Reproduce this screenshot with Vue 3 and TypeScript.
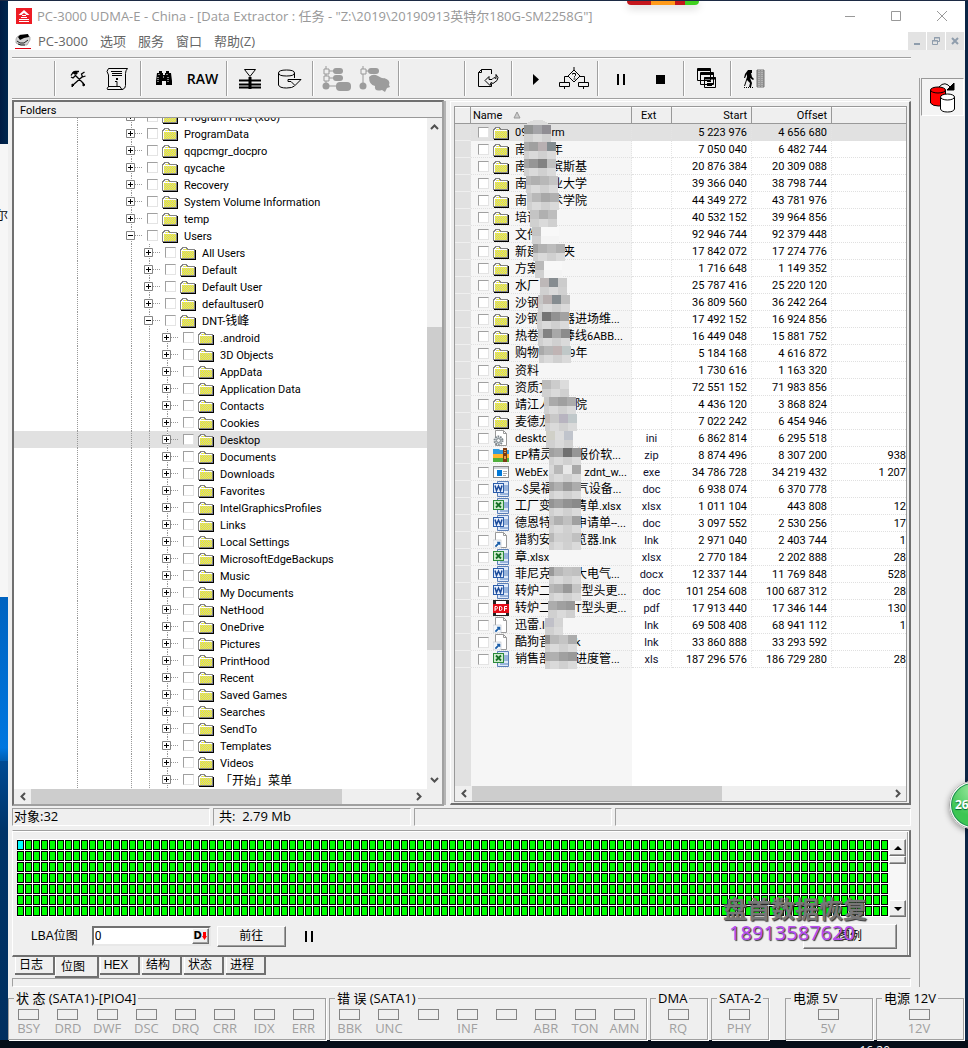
<script setup lang="ts">
import { ref } from 'vue'

interface TreeNode { name: string; level: number; open?: boolean }
interface FileRow { name: string; kind: string; ext: string; start: string; offset: string; size: string }
interface Tile { x: number; y: number; w: number; fill: string; under: string }

const level = (n: number, names: string[]): TreeNode[] => names.map((name) => ({ name, level: n }))

const nodes: TreeNode[] = [
  ...level(0, ['Program Files (x86)', 'ProgramData', 'qqpcmgr_docpro', 'qycache', 'Recovery', 'System Volume Information', 'temp']),
  { name: 'Users', level: 0, open: true },
  ...level(1, ['All Users', 'Default', 'Default User', 'defaultuser0']),
  { name: 'DNT-钱峰', level: 1, open: true },
  ...level(2, [
    '.android', '3D Objects', 'AppData', 'Application Data', 'Contacts', 'Cookies', 'Desktop', 'Documents',
    'Downloads', 'Favorites', 'IntelGraphicsProfiles', 'Links', 'Local Settings', 'MicrosoftEdgeBackups',
    'Music', 'My Documents', 'NetHood', 'OneDrive', 'Pictures', 'PrintHood', 'Recent', 'Saved Games',
    'Searches', 'SendTo', 'Templates', 'Videos', '「开始」菜单',
  ]),
]
const selectedNode = ref('Desktop')

const source: string[][] = [
  ['09　　rm', 'folder', '', '5 223 976', '4 656 680', ''],
  ['南　　年', 'folder', '', '7 050 040', '6 482 744', ''],
  ['南　　滨斯基', 'folder', '', '20 876 384', '20 309 088', ''],
  ['南　　业大学', 'folder', '', '39 366 040', '38 798 744', ''],
  ['南京　术学院', 'folder', '', '44 349 272', '43 781 976', ''],
  ['培训', 'folder', '', '40 532 152', '39 964 856', ''],
  ['文件', 'folder', '', '92 946 744', '92 379 448', ''],
  ['新建　　夹', 'folder', '', '17 842 072', '17 274 776', ''],
  ['方案', 'folder', '', '1 716 648', '1 149 352', ''],
  ['水厂', 'folder', '', '25 787 416', '25 220 120', ''],
  ['沙钢', 'folder', '', '36 809 560', '36 242 264', ''],
  ['沙钢　　器进场维...', 'folder', '', '17 492 152', '16 924 856', ''],
  ['热卷　　棒线6ABB...', 'folder', '', '16 449 048', '15 881 752', ''],
  ['购物　　19年', 'folder', '', '5 184 168', '4 616 872', ''],
  ['资料', 'folder', '', '1 730 616', '1 163 320', ''],
  ['资质文', 'folder', '', '72 551 152', '71 983 856', ''],
  ['靖江人　　院', 'folder', '', '4 436 120', '3 868 824', ''],
  ['麦德龙', 'folder', '', '7 022 242', '6 454 946', ''],
  ['desktop', 'ini', 'ini', '6 862 814', '6 295 518', ''],
  ['EP精灵　　报价软...', 'zip', 'zip', '8 874 496', '8 307 200', '938'],
  ['WebEx　　　zdnt_w...', 'exe', 'exe', '34 786 728', '34 219 432', '1 207'],
  ['~$昊福　　气设备...', 'doc', 'doc', '6 938 074', '6 370 778', ''],
  ['工厂变　　清单.xlsx', 'xls', 'xlsx', '1 011 104', '443 808', '12'],
  ['德恩特　　申请单--...', 'doc', 'doc', '3 097 552', '2 530 256', '17'],
  ['猎豹安　　览器.lnk', 'lnk', 'lnk', '2 971 040', '2 403 744', '1'],
  ['章.xlsx', 'xls', 'xlsx', '2 770 184', '2 202 888', '28'],
  ['菲尼克　　大电气...', 'doc', 'docx', '12 337 144', '11 769 848', '528'],
  ['转炉二　　T型头更...', 'doc', 'doc', '101 254 608', '100 687 312', '28'],
  ['转炉二　　T型头更...', 'pdf', 'pdf', '17 913 440', '17 346 144', '130'],
  ['迅雷.lnk', 'lnk', 'lnk', '69 508 408', '68 941 112', '1'],
  ['酷狗音　　k', 'lnk', 'lnk', '33 860 888', '33 293 592', ''],
  ['销售部　　进度管...', 'xls', 'xls', '187 296 576', '186 729 280', '28'],
]
const files: FileRow[] = source.map(([name, kind, ext, start, offset, size]) => ({ name, kind, ext, start, offset, size }))

/* Redaction tiles over the name column: row, left edge, tile shades. */
const maskSource: [number, number, string][] = [
  [0, 9, '929494 a4a4a8 908e94'], [1, 9, 'aaaaaa a0a0a0 b8b0b2 838c90'], [2, 9, 'a4a4a4 969696 828282 c0c0c0'],
  [3, 11, 'b8b8b8 b0b0b0 b8b8b8 c4c4c4'], [4, 12, 'c8c8c8 b8b8b8 a8a8a8 b0b0b0'], [5, 15, 'c4c4c4 b0b0b0 bdbdbd'],
  [6, 17, 'c4c4c4 f8f8f8 f8f8f8'], [7, 18, 'a0a0a0 b2b2b2 bcbcbc b0b0b0'], [8, 20, 'bababa f8f8f8 f8f8f8'],
  [9, 25, 'bdb8b8 868c90 cccccc'], [10, 23, 'c6c6c6 b8b0b0 858c90 c0c0c0'], [11, 22, 'c8c8c8 747474 929292 a2a2a2'],
  [12, 23, 'c0c0c0 828282 a8a8a8 8c8c8c'], [13, 24, 'aaaaaa b8b8b8 c0b4b4 c0c8c8'], [15, 27, 'bcbcbc cccccc dcdcdc'],
  [16, 29, 'c8c8c8 aaaaaa a0a0a0 acacac'], [17, 30, 'c0b8b4 c8c8c8 b8b4c0 c0c8ca'], [18, 31, 'd0d0c8 dcdcdc c0c4cc'],
  [19, 34, 'a0a0a0 a8a8a8 707070 969696'], [20, 34, 'd8d8d8 b8b8b8 e8e8e8 a8a8a8'], [21, 34, 'a0a0a0 b0b0b0 999999 acacac'],
  [22, 34, '949494 a0a0a0 929292 8a8a8a'], [23, 34, 'c4c4c4 b0b0b0 c0c0c0 a0a0a0'], [24, 34, 'b8b8b8 d0d0d0 cecece c0c0c0'],
  [26, 34, '999999 b8b8b8 c4c4c4 c0c0c0'], [27, 34, 'b8b8b8 b0b0b0 999999 c4c4c4'], [28, 33, 'acacac a0a0a0 999999'],
  [29, 30, 'c0c0c8 d4d4d4'], [30, 30, '929292 bababa c4c4c4 acacac'], [31, 30, 'acacac b0b0b0 a0a0a0 999999'],
]
/* Four-tile rows start with a narrow tile, the others use full tiles. */
const tiles: Tile[] = maskSource.flatMap(([row, x, s]) => {
  const shades = s.split(' ')
  const cut = shades.length > 3 ? 4 : 0
  return shades.map((c, k) => ({
    x: k ? x - cut + k * 9 : x,
    y: row * 17 + 6,
    w: k ? 9 : 9 - cut,
    fill: '#' + c,
    under: c === 'f8f8f8' ? '#f4f4f4' : k % 2 ? '#dadada' : '#d0d0d0',
  }))
})

/* Splits a label into runs so that Latin text gets its own face and size. */
const runs = (s: string) => (s.match(/[\x20-\x7e]+|[^\x20-\x7e]+/g) ?? []).map((text) => ({ text, latin: /^[\x20-\x7e]/.test(text) }))

const toolbar: { width: number; items: string[] }[] = [
  { width: 42, items: [] },
  { width: 86, items: ['tools', 'script'] },
  { width: 86, items: ['find', 'RAW'] },
  { width: 86, items: ['filter', 'disk'] },
  { width: 86, items: ['tree-a', 'tree-b'] },
  { width: 66, items: [] },
  { width: 47, items: ['export'] },
  { width: 86, items: ['play', 'decision'] },
  { width: 86, items: ['pause', 'stop'] },
  { width: 47, items: ['windows'] },
  { width: 47, items: ['exit'] },
]
const menus = ['PC-3000', '选项', '服务', '窗口', '帮助(Z)']
const tabs = ['日志', '位图', 'HEX', '结构', '状态', '进程']
const activeTab = ref('位图')
const lba = ref('0')

const groups = [
  { title: '状 态 (SATA1)-[PIO4]', first: false, leds: ['BSY', 'DRD', 'DWF', 'DSC', 'DRQ', 'CRR', 'IDX', 'ERR'] },
  { title: '错 误 (SATA1)', first: false, leds: ['BBK', 'UNC', '', 'INF', '', 'ABR', 'TON', 'AMN'] },
  { title: 'DMA', first: false, leds: ['RQ'] },
  { title: 'SATA-2', first: false, leds: ['PHY'] },
  { title: '电源 5V', first: true, leds: ['5V'] },
  { title: '电源 12V', first: false, leds: ['12V'] },
]
</script>

<template>
  <div class="desktop">
    <svg class="defs" width="0" height="0" aria-hidden="true">
      <defs>
        <pattern id="dither" width="2" height="2" patternUnits="userSpaceOnUse">
          <rect width="2" height="2" fill="#ffff00" /><rect width="1" height="1" fill="#c0c0c0" /><rect x="1" y="1" width="1" height="1" fill="#c0c0c0" />
        </pattern>
        <symbol id="k-folder" viewBox="0 0 16 16">
          <path d="M1 15h14V6h1v10H1z" fill="#000" />
          <path d="M0 5h1V4h1V3h5v1h1v1h7v10H0z" fill="#848484" />
          <path d="M1 6h1V5h1V4h3v1h1v1h7v8H1z" fill="#fff" />
          <rect x="2" y="7" width="12" height="7" fill="url(#dither)" /><path d="M3 5h4v1H2z" fill="url(#dither)" />
        </symbol>
        <symbol id="k-lnk" viewBox="0 0 16 16">
          <path d="M2.5 .5h8l3 3v12h-11z" fill="#fff" stroke="#999" /><path d="M10.500 .5v3h3" fill="none" stroke="#999" />
          <rect x="0" y="8" width="8" height="8" fill="#f2f6fa" stroke="#b8c0c8" stroke-width=".6" />
          <path d="M2 14l3-3-1-1h3v3l-1-1-3 3z" fill="#1b5ea8" stroke="#1b5ea8" stroke-width=".5" />
        </symbol>
        <symbol id="k-ini" viewBox="0 0 16 16">
          <path d="M2.500 .5h8l3 3v12h-11z" fill="#fff" stroke="#999" /><path d="M10.500 .5v3h3" fill="none" stroke="#999" />
          <circle cx="5.500" cy="10.500" r="4" fill="#cfd6da" stroke="#7e878c" stroke-width="2" stroke-dasharray="1.500 1" /><circle cx="5.500" cy="10.500" r="2" fill="#eef1f2" stroke="#7e878c" />
        </symbol>
        <symbol id="k-zip" viewBox="0 0 16 16">
          <path d="M0 2h6l1 1h9v5H0z" fill="#2f9be0" /><path d="M0 7h16v4H0z" fill="#ffb62e" /><path d="M0 11h16v4H0z" fill="#4fb03c" />
          <path d="M10 1h4v14h-4z" fill="#7a3b12" /><path d="M11 3h2v1h-2zM11 5h2v1h-2zM11 9h2v3h-2z" fill="#e0a050" />
        </symbol>
        <symbol id="k-exe" viewBox="0 0 16 16">
          <rect x=".5" y="2.500" width="15" height="11" fill="#fff" stroke="#888" /><path d="M1 3h14v2H1z" fill="#d0d4d8" />
          <rect x="4" y="6" width="5" height="6" fill="#0078d7" /><path d="M10 7h4v1h-4zM10 9h4v1h-4zM10 11h3v1h-3z" fill="#aaa" />
        </symbol>
        <symbol id="k-doc" viewBox="0 0 16 16">
          <path d="M4.500 .5h11v15h-11z" fill="#dfe9f8" stroke="#5b7fb8" /><path d="M11 5h4M11 7h4M7 13h8M11 9h4" stroke="#5580c0" />
          <rect x="0" y="2" width="11" height="10" fill="#2a5caa" /><rect x="1" y="3" width="9" height="8" fill="#e8f0fc" />
          <path d="M2 4.500l1.500 5L5.500 5l2 4.500 1.500-5" fill="none" stroke="#1b4a9a" stroke-width="1.500" />
        </symbol>
        <symbol id="k-xls" viewBox="0 0 16 16">
          <path d="M4.500 .5h11v15h-11z" fill="#dfe9f8" stroke="#5b7fb8" /><path d="M11 5h4M11 7h4M7 13h8M11 9h4" stroke="#5580c0" />
          <rect x="0" y="2" width="11" height="10" fill="#2b8a3a" /><rect x="1" y="3" width="9" height="8" fill="#cfeccf" />
          <path d="M3 4.500l5 5M8 4.500l-5 5" fill="none" stroke="#157025" stroke-width="1.800" />
        </symbol>
        <symbol id="k-pdf" viewBox="0 0 16 16">
          <path d="M0 0h16v16H0z" fill="#222" /><path d="M3 1h10v3H3zM3 13h10v2H3z" fill="#fff" /><path d="M0 4h16v9H0z" fill="#e20b16" />
          <path d="M2 11V6.500h1.500q1 0 1 1.200T3.500 9H2M6.500 6.500v4h1q1.500 0 1.500-2t-1.500-2zM11.500 11V6.500H14M11.500 8.700H14" fill="none" stroke="#fff" />
        </symbol>
      </defs>
    </svg>

    <div class="screen">
      <div class="wall left"><i class="w1"></i><i class="w2">尔</i></div>

      <div class="window">
        <header class="title">
          <svg width="16" height="16" viewBox="0 0 16 16"><path d="M0 0h16v16H0z" fill="#ed1c24" /><path d="M8 2L2.500 7h3L8 5l2.500 2h3z" fill="#fff" /><path d="M6 7.500h4M5 9.500h6M3 11.500h10M3 13.500h10" stroke="#fff" /></svg>
          <h1>PC-3000 UDMA-E - China - [Data Extractor : 任务 - "Z:\2019\20190913英特尔180G-SM2258G"]</h1>
          <div class="winbtns">
            <button aria-label="Minimize"><svg width="12" height="12"><path d="M1 6.500h10" stroke="#999" /></svg></button>
            <button aria-label="Maximize"><svg width="12" height="12"><path d="M1.500 1.500h9v9h-9z" fill="none" stroke="#999" /></svg></button>
            <button aria-label="Close"><svg width="12" height="12"><path d="M1 1l10 10M11 1L1 11" stroke="#999" /></svg></button>
          </div>
        </header>

        <nav class="menu">
          <svg width="16" height="16" viewBox="0 0 16 16"><path d="M2 4l3-2h8l2 2v3l-3 5H5L1 10V6z" fill="#d4d4d4" stroke="#888" stroke-width=".6" /><path d="M5 2l8-1 1 3-5 1-4 2-2-3z" fill="#000" /><path d="M2 8l3 2h4l4-3M3 11l3 1h4" fill="none" stroke="#222" /><path d="M0 15.500h16" stroke="#e00010" /></svg>
          <button v-for="m in menus" :key="m">{{ m }}</button>
          <div class="mdi">
            <button aria-label="Minimize document"><svg width="10" height="10"><path d="M2 8h6" stroke="#8f9dac" stroke-width="2" /></svg></button>
            <button aria-label="Restore document"><svg width="10" height="10"><path d="M3.500 4V1.500h5v4H7M3 2h6M1.500 4.500h5v4h-5zM1 5h6" fill="none" stroke="#8f9dac" /></svg></button>
            <button aria-label="Close document"><svg width="10" height="10"><path d="M2 2l6 6M8 2L2 8" stroke="#8f9dac" stroke-width="2" /></svg></button>
          </div>
        </nav>

        <div class="body">
          <main>
            <div class="toolbar">
              <div v-for="(g, i) in toolbar" :key="i" class="tgroup" :style="{ width: g.width + 'px' }">
                <button v-for="t in g.items" :key="t" :aria-label="t" :disabled="t.startsWith('tree')">
                  <template v-if="t === 'RAW'">RAW</template>
                  <svg v-else width="32" height="28" viewBox="0 0 32 28" fill="none" stroke="#000">
                    <g v-if="t === 'tools'"><path d="M9 10.500l2-3 2-1h4M9 12l2 1 3-3M13 10l9 9M22.500 7l-3 2 1 3 3-1M20 12l-9 8" stroke-width="1.300" /><path d="M11 7h4v2h-3zM10 19l2 1-2 2zM21 18l2 2-2 1z" fill="#000" /></g>
                    <g v-else-if="t === 'script'"><path d="M7.500 3.500h19q-2 2-2 5v12q0 3-3 4H6.500q-1-1 1-3V10q-3-4 0-6.500zM7 21.500h12q1 3 3 3" /><path d="M10 6.500h11M11 8.500h10M11 10.500h10M13 21.500h6M14 16.500h2v5" /><path d="M15 13h2v2h-2z" fill="#000" stroke="none" /></g>
                    <g v-else-if="t === 'find'"><path d="M9 8h2V6h3v2h1v2h2V8h1V6h3v2h2l1 8v4h-6v-4h-4v4H8v-4z" fill="#000" stroke="none" /><path d="M10 12v5M11 9v2M20 12v5M19 9v2M15 12h2" stroke="#fff" stroke-dasharray="1 1" /></g>
                    <g v-else-if="t === 'filter'"><path d="M10.500 4.500h11l-5.500 7z" /><path d="M5 15.500h22M5 19.500h22M5 22.500h22" stroke-width="2" /><path d="M16 12v12" stroke-width="3" /></g>
                    <g v-else-if="t === 'disk'"><path d="M5.500 8v12q1 3 8 3 6 0 8-2M21.500 8v5M5.500 8q0-3 8-3t8 3-8 3-8-3M15 14.500h13l-6 6-4-4h-3z" /></g>
                    <g v-else-if="t === 'tree-a'" class="dim"><path d="M6 1v22M6 6h10M6 13h10M6 21h10" stroke="#999" /><path d="M4 4h5v5H4zM4 11h5v5H4z" fill="#efefef" stroke="#999" /><rect x="13" y="3" width="10" height="6" rx="3" /><rect x="13" y="10" width="10" height="6" rx="3" /><circle cx="6" cy="21" r="3.500" /><rect x="16" y="17" width="15" height="9" rx="4" /></g>
                    <g v-else-if="t === 'tree-b'" class="dim"><path d="M4 1v22M4 6h10" stroke="#999" /><path d="M2 4h5v5H2z" fill="#efefef" stroke="#999" /><rect x="9" y="3" width="11" height="6" rx="3" /><circle cx="4" cy="21" r="3.500" /><path d="M10 12q4-4 9-1t6 2q7 2 5 7l1 2-3 1-2 4-3-2q-8 2-7-4-6-1-6-9z" /></g>
                    <g v-else-if="t === 'export'"><path d="M19.500 9V4.500h-10l-3 3v14h13v-3M9.500 4.500v3h-3" /><path d="M24 9.500l2 3-1 3-4 3-2-1-1 3-5-5 4-4v3h3l2-2 2 1z" fill="#efefef" /></g>
                    <path v-else-if="t === 'play'" d="M14 9v11l6-5.500z" fill="#000" stroke="none" />
                    <g v-else-if="t === 'decision'"><path d="M16 2v3l6 6-6 6-6-6 6-6M10 11.500H6.500v6M22 11.500h4.500v6M1.500 17.500h10v4h-10zM20.500 17.500h10v4h-10zM6.500 22v2M25.500 22v2M14.500 9.500v-1h3v2l-1 1v1" /><path d="M15.500 14h2" /></g>
                    <path v-else-if="t === 'pause'" d="M13 9v11M19 9v11" stroke-width="2" />
                    <path v-else-if="t === 'stop'" d="M12 10h9v9h-9z" fill="#000" stroke="none" />
                    <g v-else-if="t === 'windows'" fill="#efefef"><path d="M6.500 3.500h13v12h-13zM9.500 7.500h13v12h-13zM13.500 12.500h11v10h-11z" /><path d="M6 5h14M9 9h14M13 13.500h12" stroke-width="2" /><path d="M16 16.500h4M16 18.500h7M16 20.500h5" /></g>
                    <g v-else><path d="M19 5h7v17h-7z" fill="#999" stroke="#777" /><path d="M21 5v17M24 5v17" stroke="#ccc" stroke-dasharray="1 1" /><path d="M10 5h4v3h-1l1 4 2 2-1 1-3-2 2 5-1 4h-2l1-4-3-3-2 6H6l3-9V9l-2 4H6l1-4z" fill="#000" stroke="none" /><path d="M6 22.500h10" stroke-dasharray="1 1" /></g>
                  </svg>
                </button>
              </div>
            </div>

            <div class="split">
              <section class="tree">
                <h2>Folders</h2>
                <div class="treemain">
                  <ul>
                    <li v-for="n in nodes" :key="n.name" :class="['l' + n.level, { sel: n.name === selectedNode }]" @click="selectedNode = n.name">
                      <i class="guide g0"></i><i v-if="n.level > 0" class="guide g1"></i><i v-if="n.level > 1" class="guide g2"></i>
                      <span class="exp"><svg width="9" height="9"><path d="M.5 .5h8v8h-8z" fill="#fff" stroke="#848484" /><path :d="n.open ? 'M2 4.500h5' : 'M2 4.500h5M4.500 2v5'" stroke="#000" /></svg></span>
                      <i class="stub"></i>
                      <input type="checkbox" :aria-label="n.name" />
                      <svg class="icon" width="16" height="16" shape-rendering="crispEdges"><use href="#k-folder" /></svg>
                      <span class="label"><span v-for="(r, k) in runs(n.name)" :key="k" :class="{ latin: r.latin }">{{ r.text }}</span></span>
                    </li>
                  </ul>
                  <div class="vbar"><button aria-label="Up"><svg width="9" height="6"><path d="M1 5l3.500-3.500L8 5" /></svg></button><i></i><button aria-label="Down"><svg width="9" height="6"><path d="M1 1l3.500 3.500L8 1" /></svg></button></div>
                </div>
                <div class="hbar"><button aria-label="Left"><svg width="6" height="9"><path d="M5 1L1.500 4.500 5 8" /></svg></button><div class="track"><i class="t1"></i></div><button aria-label="Right"><svg width="6" height="9"><path d="M1 1l3.500 3.500L1 8" /></svg></button><b></b></div>
              </section>

              <section class="list">
                <div class="inner">
                  <div class="rows">
                    <table>
                      <colgroup><col class="c0" /><col class="c1" /><col class="c2" /><col class="c3" /><col class="c3" /><col /></colgroup>
                      <thead><tr><th></th><th class="nm">Name <svg width="8" height="8"><path d="M4 1l3 6H1z" fill="#ccc" stroke="#999" /></svg></th><th class="mid">Ext</th><th>Start</th><th>Offset</th><th></th></tr></thead>
                      <tbody>
                        <tr v-for="(f, i) in files" :key="i" :class="{ sel: i === 0 }">
                          <td class="gut"></td>
                          <td class="nm"><div class="cell"><input type="checkbox" :aria-label="f.name" /><svg class="icon" width="16" height="16" :shape-rendering="f.kind === 'folder' ? 'crispEdges' : 'auto'"><use :href="'#k-' + f.kind" /></svg><span class="label"><span v-for="(r, k) in runs(f.name)" :key="k" :class="{ latin: r.latin }">{{ r.text }}</span></span></div></td>
                          <td class="mid">{{ f.ext }}</td><td>{{ f.start }}</td><td>{{ f.offset }}</td><td class="sz">{{ f.size }}</td>
                        </tr>
                      </tbody>
                    </table>
                    <svg class="mask" width="90" height="552" shape-rendering="crispEdges">
                      <path d="M10 6q13-11 25 0z" fill="#dcdcdc" />
                      <g v-for="(t, k) in tiles" :key="k">
                        <rect :x="t.x" :y="t.y" :width="t.w" height="9" :fill="t.fill" />
                        <rect :x="t.x" :y="t.y + 9" :width="t.w" height="8" :fill="t.under" />
                      </g>
                    </svg>
                  </div>
                  <div class="hbar"><button aria-label="Left"><svg width="6" height="9"><path d="M5 1L1.500 4.500 5 8" /></svg></button><div class="track"><i class="t2"></i></div><button aria-label="Right"><svg width="6" height="9"><path d="M1 1l3.500 3.500L1 8" /></svg></button></div>
                </div>
              </section>
            </div>

            <div class="status"><span>对象:32</span><span class="in">共:&nbsp; 2.79 Mb</span><span></span><span></span></div>

            <section class="map">
              <div class="grid">
                <svg width="100%" height="78" shape-rendering="crispEdges" role="img" aria-label="LBA map">
                  <defs><pattern id="lba" y="1" width="8" height="11" patternUnits="userSpaceOnUse"><rect width="7" height="10" fill="#000" /><rect x="1" y="1" width="5" height="8" fill="#00ff00" /></pattern></defs>
                  <rect y="1" width="100%" height="77" fill="url(#lba)" /><rect x="1" y="2" width="5" height="8" fill="#00ffff" />
                </svg>
                <div class="oldbar"><button aria-label="Scroll up"><svg width="8" height="4"><path d="M0 4l4-4 4 4z" /></svg></button><i></i><span></span><button aria-label="Scroll down"><svg width="8" height="4"><path d="M0 0h8L4 4z" /></svg></button></div>
              </div>
              <div class="controls">
                <label for="lba-input">LBA位图</label>
                <div class="field"><input id="lba-input" v-model="lba" type="text" /><button aria-label="Decimal"><b>D</b><svg width="5" height="8"><path d="M1 0h3v4h1L2.500 8 0 4h1z" fill="#f00" /></svg></button></div>
                <button class="btn go">前往</button>
                <button class="plain" aria-label="Pause"><svg width="8" height="11"><path d="M1 0v11M7 0v11" stroke="#000" stroke-width="2" /></svg></button>
                <button class="btn legend">图例</button>
              </div>
              <div class="watermark"><b>盘首数据恢复</b><span>18913587620</span></div>
            </section>
            <div class="tabs" role="tablist"><button v-for="t in tabs" :key="t" role="tab" :class="{ on: t === activeTab }" @click="activeTab = t">{{ t }}</button></div>
            <div class="foot"></div>
          </main>

          <aside>
            <button aria-label="Copy disk"><svg width="28" height="31" viewBox="0 0 28 31" stroke="#000"><path d="M10 5q6-7 12 1" fill="none" /><path d="M25 1v7h-7z" fill="#000" /><path d="M1.500 8v13q2 3 8 3t7-3V8" fill="#f00" /><ellipse cx="9" cy="8" rx="7.500" ry="3" fill="#f00" /><path d="M11.500 15v12q1 3 7 3t7-3V15" fill="#fff" /><ellipse cx="18.500" cy="15" rx="7" ry="3" fill="#fff" /></svg></button>
          </aside>
        </div>

        <div class="leds">
          <fieldset v-for="g in groups" :key="g.title" :class="{ first: g.first }">
            <legend>{{ g.title }}</legend>
            <div v-for="(l, i) in g.leds" :key="i" class="led"><i></i><span>{{ l }}</span></div>
          </fieldset>
        </div>
      </div>
      <div class="wall right"></div>
    </div>
    <footer class="taskbar"><time>16:20</time></footer>
    <div class="ribbon"></div>
    <div class="ball">26</div>
  </div>
</template>

<style>
body { margin: 0; background: #050d18; }
</style>

<style scoped>
.desktop { position: relative; overflow: hidden; border-top: 1px solid #1c2a44; font: 12px/16px "Liberation Sans", "Noto Sans CJK SC", sans-serif; color: #000; }
.desktop * { box-sizing: border-box; }
.defs { position: absolute; }
button { font: inherit; color: inherit; padding: 0; margin: 0; border: 0; background: none; display: flex; align-items: center; justify-content: center; }
.screen { display: grid; grid-template-columns: 8px minmax(0, 1fr) 3px; }
.wall.left { background: linear-gradient(#0063c0, #0077e0 92%, #005cb0) 0 596px / 8px 164px no-repeat, linear-gradient(#004a94 0, #003468 70px, #001c40 100%) 0 760px no-repeat #00204a; display: flex; flex-direction: column; }
.wall i { display: block; overflow: hidden; font-style: normal; }
.w1 { height: 143px; background: linear-gradient(90deg, #001c44, #00284f); }
.w2 { height: 453px; background: #f6f6f6; padding-top: 64px; font-size: 12px; text-indent: -4px; }
.wall.right { background: #0b2545; }
.window { background: #efefef; }
.title { display: flex; align-items: center; height: 30px; background: #fff; padding: 0 17px 0 8px; }
h1 { margin: 0 auto 0 5px; font: 13px/20px "Open Sans", "Noto Sans CJK SC", sans-serif; color: #999; white-space: nowrap; }
.winbtns { display: flex; gap: 34px; }
.menu { display: flex; align-items: center; height: 19px; background: #fff; padding-left: 7px; font: 13px/18px "Open Sans", "Noto Sans CJK SC", sans-serif; color: #666; }
.menu > svg { margin-right: 7px; }
.menu > button { margin-right: 12px; }
.mdi { display: flex; gap: 1px; margin: 0 1px 0 auto; }
.mdi button { width: 18px; height: 18px; background: #e3e3e3; }
.body { display: flex; padding-left: 4px; }
main { flex: 1; min-width: 0; }
aside { width: 46px; margin: 28px 0 0 8px; border-left: 1px solid #a0a0a0; }
aside button { width: 43px; height: 38px; margin-left: 1px; border: 1px solid; border-color: #999 #fff #fff #999; background: #f4f4f4; }
.toolbar { display: flex; margin-top: 7px; height: 42px; padding: 3px 0 2px; border-top: 1px solid #a0a0a0; border-bottom: 1px solid #a0a0a0; box-shadow: inset 0 1px #fff, 0 1px #fff; }
.tgroup { display: flex; padding: 0 3px; border-left: 1px solid #a0a0a0; box-shadow: inset 1px 0 #fff; }
.tgroup:first-child { border-left: 0; box-shadow: none; }
.tgroup button { width: 39px; flex: none; font: 600 14px/18px "Open Sans", sans-serif; }
.dim rect, .dim circle, .dim > path:last-child { fill: #9c9c9c; stroke: none; }

.split { display: grid; grid-template-columns: 432fr 461fr; gap: 6px; margin-top: 1px; }
.tree { border: 2px solid; border-color: #707070 #a0a0a0 #a0a0a0 #707070; min-width: 0; box-shadow: 3px 0 0 -1px #b4b4b4; display: flex; flex-direction: column; }
h2 { margin: 0; padding-left: 6px; height: 16px; font: 11px/17px Roboto, "Liberation Sans", sans-serif; border-bottom: 1px solid #999; }
.treemain { display: flex; flex: none; height: 671px; background: #fff; overflow: hidden; }
ul { flex: 1; min-width: 0; margin: -10px 0 0; padding: 0; list-style: none; }
li { display: flex; align-items: center; height: 17px; white-space: nowrap; }
li .icon { align-self: flex-start; }
li.sel, tr.sel, tr.sel td.nm { background: #e1e1e1; }
.guide { align-self: stretch; flex: none; border-right: 1px dotted #999; }
.g0 { width: 64px; }
.g1 { width: 54px; }
.g2 { width: 18px; }
.exp { display: flex; align-items: center; flex: none; align-self: stretch; width: 9px; background: repeating-linear-gradient(#999 0 1px, #fff 1px 2px) 5px 0 / 1px 17px no-repeat; }
li.l0 .exp { margin-left: 48px; }
li.l1 .exp, li.l2 .exp { margin-left: 12px; }
.stub { width: 7px; margin-right: 5px; border-top: 1px dotted #999; flex: none; }
input[type="checkbox"] { appearance: none; flex: none; width: 11px; height: 11px; margin: 0; background: #fff; border: 1px solid; border-color: #a0a0a0 #e4e4e4 #e4e4e4 #a0a0a0; }
.icon { flex: none; margin-left: 4px; }
.label { margin-left: 6px; font: 12px/16px "Noto Sans CJK SC", sans-serif; }
.latin, td, th { font: 11px/16px Roboto, "Liberation Sans", sans-serif; }
.vbar { width: 15px; background: #efefef; display: flex; flex-direction: column; flex: none; }
.vbar button { height: 18px; }
.vbar i { margin: 191px 0 auto; height: 323px; background: #cdcdcd; }
.vbar path, .hbar path { fill: none; stroke: #505050; stroke-width: 2; }
.hbar { display: flex; height: 15px; background: #efefef; }
.hbar button { width: 17px; }
.hbar b { width: 15px; }
.track { flex: 1; display: flex; }
.t1 { width: 82%; background: #cdcdcd; }
.t2 { width: 60%; background: #cdcdcd; }
.list { min-width: 0; margin: 1px 0; padding: 4px 2px 1px 3px; border: 1px solid #fff; border-right: 2px solid #707070; border-bottom: 2px solid #707070; display: flex; flex-direction: column; }
.inner { flex: 1; border: 1px solid #999; display: flex; flex-direction: column; overflow: hidden; }
.rows { position: relative; flex: 1; background: linear-gradient(90deg, #e1e1e1 16px, #f6f6f6 16px 177px, #fff 177px); }
table { width: 100%; table-layout: fixed; border-collapse: separate; border-spacing: 0; }
.c0 { width: 16px; } .c1 { width: 161px; } .c2 { width: 40px; } .c3 { width: 80px; }
th { height: 17px; padding: 2px 4px 0 0; line-height: 14px; text-align: right; background: #efefef; border-right: 1px solid #999; border-bottom: 1px solid #999; box-shadow: inset 0 1px #fff; }
th:last-child { border-right: 0; }
th.nm { text-align: left; padding-left: 2px; }
th.nm svg { margin-left: 8px; }
th.mid { text-align: left; padding-left: 9px; }
td { height: 17px; padding: 2px 4px 0 0; line-height: 14px; text-align: right; white-space: nowrap; border-right: 1px dotted #e4e4e4; border-bottom: 1px dotted #e0e0e0; overflow: hidden; }
td.mid { text-align: center; padding: 2px 0 0; color: #101030; }
td.sz { padding: 2px 0 0; border-right: 0; }
td.gut { border-bottom: 1px solid #efefef; }
td.nm { padding: 0 0 0 7px; }
.cell { display: flex; align-items: center; height: 16px; }
.mask { position: absolute; left: 60px; top: 12px; }

.status { display: flex; gap: 3px; height: 18px; margin-top: 2px; font: 13px/17px "Open Sans", "Noto Sans CJK SC", sans-serif; }
.status span { flex: 0 1 198px; border: 1px solid; border-color: #a0a0a0 #fff #fff #a0a0a0; padding-left: 1px; white-space: pre; line-height: 15px; }
.status span:last-child { flex: 1; }
.status .in { padding-left: 5px; }
.map { position: relative; margin-top: 4px; border: 1px solid; border-color: #a0a0a0 #707070 #707070 #fff; border-right-width: 2px; border-bottom-width: 2px; box-shadow: inset 0 1px #fff, inset -1px 0 #fff, inset -2px 0 #a0a0a0; padding: 8px 3px 0 4px; }
.grid { display: flex; background: #fff; }
.grid > svg { flex: 1; min-width: 0; }
.oldbar { width: 17px; display: flex; flex-direction: column; background: #f7f7f7; }
.oldbar button { height: 17px; }
.oldbar button, .oldbar i, .btn, .field button { background: #efefef; border: 1px solid; border-color: #fff #707070 #707070 #fff; box-shadow: inset -1px -1px #a0a0a0; }
.oldbar i { height: 8px; }
.oldbar span { flex: 1; }
.controls { display: flex; align-items: center; height: 38px; padding: 0 9px 0 14px; }
.field { display: flex; width: 119px; height: 20px; margin: 0 6px 0 14px; background: #fff; border: 2px solid; border-color: #707070 #e8e8e8 #e8e8e8 #707070; }
.field input { flex: 1; min-width: 0; border: 0; padding: 0 1px; font: 12px/16px Roboto, "Liberation Sans", sans-serif; }
.field button { width: 17px; font: bold 10px/12px "DejaVu Sans", sans-serif; }
.go { width: 69px; height: 21px; margin-right: 19px; }
.legend { width: 94px; height: 25px; margin-left: auto; }
.watermark { position: absolute; right: 42px; bottom: 10px; display: flex; flex-direction: column; align-items: center; font: 20px/24px "Noto Sans", "Noto Sans CJK SC", sans-serif; color: #b84cf0; text-shadow: 1px 1px 1px #333; pointer-events: none; }
.watermark span { margin-right: 6px; }
.watermark b { font: bold 24px/26px "Noto Sans CJK SC", sans-serif; color: #777; }
.tabs { display: flex; align-items: flex-start; padding-left: 3px; height: 21px; }
.tabs button { width: 40px; height: 18px; margin-right: 2px; padding-right: 6px; border: solid #707070; border-width: 0 2px 2px 0; box-shadow: inset 1px 0 #fff; line-height: 16px; }
.tabs button.on { width: 44px; height: 21px; margin: 0 1px 0 -2px; }
.foot { height: 9px; border: 1px solid; border-color: #a0a0a0 #fff #fff #a0a0a0; }
.leds { display: grid; grid-template-columns: 318fr 318fr 58fr 58fr 101fr 88fr; gap: 3px; padding: 3px 1px 0 0; font: 13px/17px "Open Sans", "Noto Sans CJK SC", sans-serif; }
fieldset { margin: 0; min-width: 0; height: 50px; padding: 2px 2px 0 0; border: 1px solid #a0a0a0; box-shadow: 1px 1px #fff; display: flex; }
fieldset.first { margin-left: 13px; }
legend { margin-left: 5px; padding: 0 2px; white-space: nowrap; line-height: 17px; }
.led { flex: 1; display: flex; flex-direction: column; align-items: center; color: #a0a0a0; }
.led i { width: 21px; height: 11px; border: 1px solid #848484; }
.taskbar { height: 8px; overflow: hidden; background: #050d18; color: #fff; padding: 3px 78px 0 0; text-align: right; font: 12px/16px "Open Sans", sans-serif; }
.ribbon { position: absolute; right: 269px; top: -1px; width: 72px; height: 5px; border-radius: 0 0 4px 4px; background: linear-gradient(90deg, #c4161c 33%, #ff9a1a 34% 66%, #c4161c 67% 80%, #3fd01f 81%); box-shadow: 0 3px 8px #0003; }
.ball { position: absolute; right: -29px; top: 780px; width: 48px; height: 48px; border-radius: 50%; border: 2px solid #fff; outline: 1px solid #aaa; outline-offset: -1px; background: radial-gradient(circle at 50% 15%, #9be8a0, #3dc653 60%); box-shadow: 0 2px 6px #0006, inset 0 0 0 1px #1f8a55; color: #fff; font: bold 12px/44px "Open Sans", sans-serif; padding-left: 4px; text-shadow: 0 1px 1px #063; }
</style>
